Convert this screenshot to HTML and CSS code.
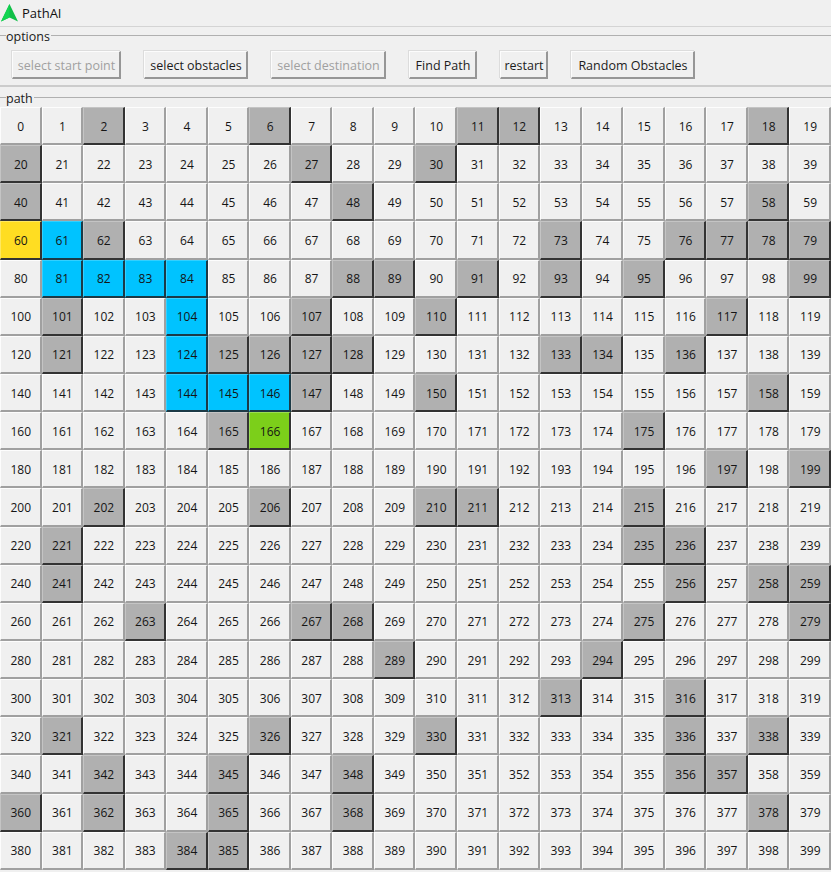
FILE: index.html
```html
<!DOCTYPE html>
<html lang="en">
<head>
<meta charset="utf-8">
<title>PathAI</title>
<link rel="stylesheet" href="styles.css">
</head>
<body>
<header class="titlebar">
<svg class="logo" width="17" height="18" viewBox="0 0 17 18"><path d="M8.5 0 L17 17.5 L8.5 13.5 L0 17.5 Z" fill="#10bf48"/><path d="M8.5 0 L8.5 13.5 L0 17.5 Z" fill="#12d452"/></svg>
<span class="title">PathAI</span>
</header>
<section class="options">
<div class="legend"><span class="legend-text">options</span></div>
<div class="tools">
<div class="btn disabled w1">select start point</div>
<div class="btn w2">select obstacles</div>
<div class="btn disabled w3">select destination</div>
<div class="btn w4">Find Path</div>
<div class="btn w5">restart</div>
<div class="btn w6">Random Obstacles</div>
</div>
</section>
<section class="path">
<div class="legend"><span class="legend-text">path</span></div>
<div class="grid">
<div class="cell">0</div><div class="cell">1</div><div class="cell wall">2</div><div class="cell">3</div><div class="cell">4</div><div class="cell">5</div><div class="cell wall">6</div><div class="cell">7</div><div class="cell">8</div><div class="cell">9</div><div class="cell">10</div><div class="cell wall">11</div><div class="cell wall">12</div><div class="cell">13</div><div class="cell">14</div><div class="cell">15</div><div class="cell">16</div><div class="cell">17</div><div class="cell wall">18</div><div class="cell">19</div>
<div class="cell wall">20</div><div class="cell">21</div><div class="cell">22</div><div class="cell">23</div><div class="cell">24</div><div class="cell">25</div><div class="cell">26</div><div class="cell wall">27</div><div class="cell">28</div><div class="cell">29</div><div class="cell wall">30</div><div class="cell">31</div><div class="cell">32</div><div class="cell">33</div><div class="cell">34</div><div class="cell">35</div><div class="cell">36</div><div class="cell">37</div><div class="cell">38</div><div class="cell">39</div>
<div class="cell wall">40</div><div class="cell">41</div><div class="cell">42</div><div class="cell">43</div><div class="cell">44</div><div class="cell">45</div><div class="cell">46</div><div class="cell">47</div><div class="cell wall">48</div><div class="cell">49</div><div class="cell">50</div><div class="cell">51</div><div class="cell">52</div><div class="cell">53</div><div class="cell">54</div><div class="cell">55</div><div class="cell">56</div><div class="cell">57</div><div class="cell wall">58</div><div class="cell">59</div>
<div class="cell start">60</div><div class="cell route">61</div><div class="cell wall">62</div><div class="cell">63</div><div class="cell">64</div><div class="cell">65</div><div class="cell">66</div><div class="cell">67</div><div class="cell">68</div><div class="cell">69</div><div class="cell">70</div><div class="cell">71</div><div class="cell">72</div><div class="cell wall">73</div><div class="cell">74</div><div class="cell">75</div><div class="cell wall">76</div><div class="cell wall">77</div><div class="cell wall">78</div><div class="cell wall">79</div>
<div class="cell">80</div><div class="cell route">81</div><div class="cell route">82</div><div class="cell route">83</div><div class="cell route">84</div><div class="cell">85</div><div class="cell">86</div><div class="cell">87</div><div class="cell wall">88</div><div class="cell wall">89</div><div class="cell">90</div><div class="cell wall">91</div><div class="cell">92</div><div class="cell wall">93</div><div class="cell">94</div><div class="cell wall">95</div><div class="cell">96</div><div class="cell">97</div><div class="cell">98</div><div class="cell wall">99</div>
<div class="cell">100</div><div class="cell wall">101</div><div class="cell">102</div><div class="cell">103</div><div class="cell route">104</div><div class="cell">105</div><div class="cell">106</div><div class="cell wall">107</div><div class="cell">108</div><div class="cell">109</div><div class="cell wall">110</div><div class="cell">111</div><div class="cell">112</div><div class="cell">113</div><div class="cell">114</div><div class="cell">115</div><div class="cell">116</div><div class="cell wall">117</div><div class="cell">118</div><div class="cell">119</div>
<div class="cell">120</div><div class="cell wall">121</div><div class="cell">122</div><div class="cell">123</div><div class="cell route">124</div><div class="cell wall">125</div><div class="cell wall">126</div><div class="cell wall">127</div><div class="cell wall">128</div><div class="cell">129</div><div class="cell">130</div><div class="cell">131</div><div class="cell">132</div><div class="cell wall">133</div><div class="cell wall">134</div><div class="cell">135</div><div class="cell wall">136</div><div class="cell">137</div><div class="cell">138</div><div class="cell">139</div>
<div class="cell">140</div><div class="cell">141</div><div class="cell">142</div><div class="cell">143</div><div class="cell route">144</div><div class="cell route">145</div><div class="cell route">146</div><div class="cell wall">147</div><div class="cell">148</div><div class="cell">149</div><div class="cell wall">150</div><div class="cell">151</div><div class="cell">152</div><div class="cell">153</div><div class="cell">154</div><div class="cell">155</div><div class="cell">156</div><div class="cell">157</div><div class="cell wall">158</div><div class="cell">159</div>
<div class="cell">160</div><div class="cell">161</div><div class="cell">162</div><div class="cell">163</div><div class="cell">164</div><div class="cell wall">165</div><div class="cell goal">166</div><div class="cell">167</div><div class="cell">168</div><div class="cell">169</div><div class="cell">170</div><div class="cell">171</div><div class="cell">172</div><div class="cell">173</div><div class="cell">174</div><div class="cell wall">175</div><div class="cell">176</div><div class="cell">177</div><div class="cell">178</div><div class="cell">179</div>
<div class="cell">180</div><div class="cell">181</div><div class="cell">182</div><div class="cell">183</div><div class="cell">184</div><div class="cell">185</div><div class="cell">186</div><div class="cell">187</div><div class="cell">188</div><div class="cell">189</div><div class="cell">190</div><div class="cell">191</div><div class="cell">192</div><div class="cell">193</div><div class="cell">194</div><div class="cell">195</div><div class="cell">196</div><div class="cell wall">197</div><div class="cell">198</div><div class="cell wall">199</div>
<div class="cell">200</div><div class="cell">201</div><div class="cell wall">202</div><div class="cell">203</div><div class="cell">204</div><div class="cell">205</div><div class="cell wall">206</div><div class="cell">207</div><div class="cell">208</div><div class="cell">209</div><div class="cell wall">210</div><div class="cell wall">211</div><div class="cell">212</div><div class="cell">213</div><div class="cell">214</div><div class="cell wall">215</div><div class="cell">216</div><div class="cell">217</div><div class="cell">218</div><div class="cell">219</div>
<div class="cell">220</div><div class="cell wall">221</div><div class="cell">222</div><div class="cell">223</div><div class="cell">224</div><div class="cell">225</div><div class="cell">226</div><div class="cell">227</div><div class="cell">228</div><div class="cell">229</div><div class="cell">230</div><div class="cell">231</div><div class="cell">232</div><div class="cell">233</div><div class="cell">234</div><div class="cell wall">235</div><div class="cell wall">236</div><div class="cell">237</div><div class="cell">238</div><div class="cell">239</div>
<div class="cell">240</div><div class="cell wall">241</div><div class="cell">242</div><div class="cell">243</div><div class="cell">244</div><div class="cell">245</div><div class="cell">246</div><div class="cell">247</div><div class="cell">248</div><div class="cell">249</div><div class="cell">250</div><div class="cell">251</div><div class="cell">252</div><div class="cell">253</div><div class="cell">254</div><div class="cell">255</div><div class="cell wall">256</div><div class="cell">257</div><div class="cell wall">258</div><div class="cell wall">259</div>
<div class="cell">260</div><div class="cell">261</div><div class="cell">262</div><div class="cell wall">263</div><div class="cell">264</div><div class="cell">265</div><div class="cell">266</div><div class="cell wall">267</div><div class="cell wall">268</div><div class="cell">269</div><div class="cell">270</div><div class="cell">271</div><div class="cell">272</div><div class="cell">273</div><div class="cell">274</div><div class="cell wall">275</div><div class="cell">276</div><div class="cell">277</div><div class="cell">278</div><div class="cell wall">279</div>
<div class="cell">280</div><div class="cell">281</div><div class="cell">282</div><div class="cell">283</div><div class="cell">284</div><div class="cell">285</div><div class="cell">286</div><div class="cell">287</div><div class="cell">288</div><div class="cell wall">289</div><div class="cell">290</div><div class="cell">291</div><div class="cell">292</div><div class="cell">293</div><div class="cell wall">294</div><div class="cell">295</div><div class="cell">296</div><div class="cell">297</div><div class="cell">298</div><div class="cell">299</div>
<div class="cell">300</div><div class="cell">301</div><div class="cell">302</div><div class="cell">303</div><div class="cell">304</div><div class="cell">305</div><div class="cell">306</div><div class="cell">307</div><div class="cell">308</div><div class="cell">309</div><div class="cell">310</div><div class="cell">311</div><div class="cell">312</div><div class="cell wall">313</div><div class="cell">314</div><div class="cell">315</div><div class="cell wall">316</div><div class="cell">317</div><div class="cell">318</div><div class="cell">319</div>
<div class="cell">320</div><div class="cell wall">321</div><div class="cell">322</div><div class="cell">323</div><div class="cell">324</div><div class="cell">325</div><div class="cell wall">326</div><div class="cell">327</div><div class="cell">328</div><div class="cell">329</div><div class="cell wall">330</div><div class="cell">331</div><div class="cell">332</div><div class="cell">333</div><div class="cell">334</div><div class="cell">335</div><div class="cell wall">336</div><div class="cell">337</div><div class="cell wall">338</div><div class="cell">339</div>
<div class="cell">340</div><div class="cell">341</div><div class="cell wall">342</div><div class="cell">343</div><div class="cell">344</div><div class="cell wall">345</div><div class="cell">346</div><div class="cell">347</div><div class="cell wall">348</div><div class="cell">349</div><div class="cell">350</div><div class="cell">351</div><div class="cell">352</div><div class="cell">353</div><div class="cell">354</div><div class="cell">355</div><div class="cell wall">356</div><div class="cell wall">357</div><div class="cell">358</div><div class="cell">359</div>
<div class="cell wall">360</div><div class="cell">361</div><div class="cell wall">362</div><div class="cell">363</div><div class="cell">364</div><div class="cell wall">365</div><div class="cell">366</div><div class="cell">367</div><div class="cell wall">368</div><div class="cell">369</div><div class="cell">370</div><div class="cell">371</div><div class="cell">372</div><div class="cell">373</div><div class="cell">374</div><div class="cell">375</div><div class="cell">376</div><div class="cell">377</div><div class="cell wall">378</div><div class="cell">379</div>
<div class="cell">380</div><div class="cell">381</div><div class="cell">382</div><div class="cell">383</div><div class="cell wall">384</div><div class="cell wall">385</div><div class="cell">386</div><div class="cell">387</div><div class="cell">388</div><div class="cell">389</div><div class="cell">390</div><div class="cell">391</div><div class="cell">392</div><div class="cell">393</div><div class="cell">394</div><div class="cell">395</div><div class="cell">396</div><div class="cell">397</div><div class="cell">398</div><div class="cell">399</div>
</div>
</section>
</body>
</html>
```
FILE: styles.css
```css
* { box-sizing: border-box; }
html, body { margin: 0; padding: 0; }
body {
  width: 831px;
  height: 872px;
  overflow: hidden;
  background: #f0f0f0;
  color: #1a1a1a;
  font-family: "Open Sans", "Noto Sans", "Liberation Sans", sans-serif;
  font-size: 12px;
}
.titlebar {
  height: 27px;
  display: flex;
  align-items: center;
  gap: 4px;
  padding: 0 0 0 1px;
  border-bottom: 1px solid #d4d4d4;
}
.logo { display: block; }
.title { font-size: 13px; color: #111; }
.options {
  height: 60px;
  border-bottom: 2px solid #cccccc;
}
.legend {
  height: 18px;
  display: flex;
  align-items: center;
}
.legend::before,
.legend::after {
  content: "";
  height: 1px;
  background: #b0b0b0;
  margin-top: -2px;
}
.legend::before { width: 6px; }
.legend::after { flex: 1; }
.legend-text {
  padding: 0 1px 0 0;
  font-size: 12.5px;
  line-height: 14px;
  margin-top: 2px;
}
.tools {
  display: flex;
  gap: 23px;
  padding: 6px 0 0 12px;
}
.btn {
  height: 28px;
  display: flex;
  align-items: center;
  justify-content: center;
  padding: 1px 0 0 1px;
  background: #f0f0f0;
  border-style: solid;
  border-width: 1px 2px 2px 1px;
  border-color: #fcfcfc #969696 #969696 #fcfcfc;
  box-shadow: -1px -1px 0 #dcdcdc;
  font-size: 12.5px;
  font-weight: 500;
  color: #1c1c1c;
  white-space: nowrap;
}
.btn.disabled { color: #a0a0a0; }
.w1 { width: 109px; }
.w2 { width: 104px; }
.w3 { width: 115px; }
.w4 { width: 68px; }
.w5 { width: 48px; }
.w6 { width: 124px; }
.path { padding-top: 2px; }
.grid {
  display: grid;
  grid-template-columns: repeat(20, 1fr);
  grid-auto-rows: 38.15px;
}
.cell {
  display: flex;
  align-items: center;
  justify-content: center;
  padding: 1px 0 0 1px;
  background: #f0f0f0;
  border-style: solid;
  border-width: 1px 2px 2px 1px;
  border-color: #fdfdfd #a0a0a0 #a0a0a0 #fdfdfd;
  font-size: 12px;
  color: #151515;
}
.wall {
  background: #b0b0b0;
  border-color: #c4c4c4 #333333 #333333 #c4c4c4;
}
.route {
  background: #00c3ff;
  border-color: #33d0ff #1c3a46 #1c3a46 #33d0ff;
}
.start {
  background: #ffdd22;
  border-color: #ffe860 #333333 #333333 #ffe860;
}
.goal {
  background: #7ccf1a;
  border-color: #9bdd55 #333333 #333333 #9bdd55;
}
```
